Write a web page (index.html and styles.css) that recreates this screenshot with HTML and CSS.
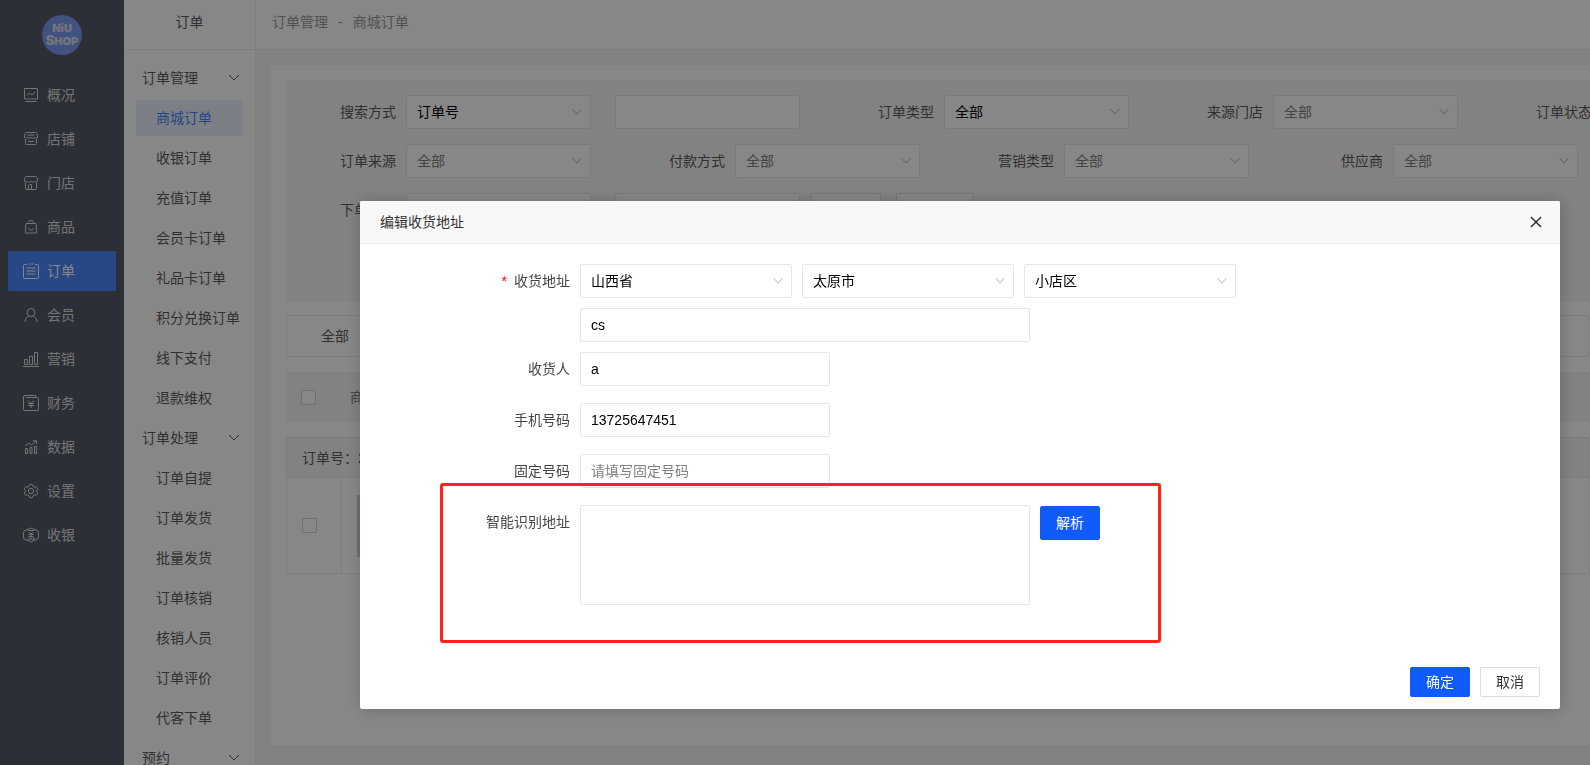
FILE: index.html
```html
<!DOCTYPE html>
<html lang="zh-CN">
<head>
    <meta charset="UTF-8">
    <meta name="viewport" content="width=device-width, initial-scale=1.0">
    <title>商城订单</title>
    <link rel="stylesheet" href="styles.css">
</head>
<body>
    <div class="app">
        <nav class="sidebar">
            <svg class="logo" viewBox="0 0 40 40" role="img" aria-label="NiuShop">
                <circle cx="20" cy="20" r="20"/>
                <text x="20" y="17" font-size="11">NiU</text>
                <text x="20" y="30"><tspan font-size="13">S</tspan><tspan font-size="11">HOP</tspan></text>
            </svg>
            <a href="#" class="nav-item">
                <svg class="icon" viewBox="0 0 16 16"><path d="M1.500 1.500h13v10.500h-13zM2.500 14.500h11M4 8.500l2.500-2.500 2.500 2 3-3"/></svg>概况
            </a>
            <a href="#" class="nav-item">
                <svg class="icon" viewBox="0 0 16 16"><path d="M3.500 1.500h9q1 0 1.300 1l.7 2.500v1.500q-1.500 1.500-3.200 0q-1.600 1.500-3.300 0q-1.700 1.500-3.300 0q-1.700 1.500-3.200 0V5l.7-2.500q.3-1 1.300-1zM2.500 8v4.500q0 1 1 1h9q1 0 1-1V8M4.500 4h7M5 10.500h6"/></svg>店铺
            </a>
            <a href="#" class="nav-item">
                <svg class="icon" viewBox="0 0 16 16"><path d="M3.500 1.500h9q1 0 1.300 1l.7 2.500v1.500q-1.500 1.500-3.200 0q-1.600 1.500-3.300 0q-1.700 1.500-3.300 0q-1.700 1.500-3.200 0V5l.7-2.500q.3-1 1.300-1zM2.500 8v5.500q0 1 1 1h9q1 0 1-1V8M5.500 14.500v-4q0-1 1-1h2v5"/></svg>门店
            </a>
            <a href="#" class="nav-item">
                <svg class="icon" viewBox="0 0 16 16"><path d="M3 4.500h10l.8 9.500H2.200zM5.500 4.500V3.500q0-2 2.500-2t2.500 2v1M5 9q1 2.200 3 2.200T11 9"/></svg>商品
            </a>
            <a href="#" class="nav-item active">
                <svg class="icon" viewBox="0 0 16 16"><path d="M4 1.500H1.500q-1 0-1 1v12q0 1 1 1h13q1 0 1-1v-12q0-1-1-1H12M5.500 1h2M8.500 1h2M3.500 5h9M3.500 8h9M3.500 11h9"/></svg>订单
            </a>
            <a href="#" class="nav-item">
                <svg class="icon" viewBox="0 0 16 16"><circle cx="8" cy="5.500" r="4"/><path d="M1.800 15q.2-4 3.700-6M14.200 15q-.2-4-3.700-6"/></svg>会员
            </a>
            <a href="#" class="nav-item">
                <svg class="icon" viewBox="0 0 16 16"><path d="M0 15.500h16M1.500 8.500h3v5h-3zM6.500 5.500h3v8h-3zM11.500 1.500h3v12h-3z"/></svg>营销
            </a>
            <a href="#" class="nav-item">
                <svg class="icon" viewBox="0 0 16 16"><path d="M3 2.500h11.500q1 0 1 1v11q0 1-1 1h-13q-1 0-1-1V2Q.5.500 2 .5h10.500l1 2M5 5.500l3 3 3-3M8 8.500V13M5 8.500h6M5 10.500h6"/></svg>财务
            </a>
            <a href="#" class="nav-item">
                <svg class="icon" viewBox="0 0 16 16"><path d="M2.500 9.500h2v5h-2zM7 8.500h2v6H7zM11.500 7.500h2v7h-2zM2 7l4-3 2.500 2L13 2M10 1.800h3.500V5"/></svg>数据
            </a>
            <a href="#" class="nav-item">
                <svg class="icon" viewBox="0 0 16 16"><circle cx="8" cy="8" r="2.700"/><path d="M6.600 1.500Q8 1 9.400 1.500L10 3.300l1.300.8 1.900-.4q1.100 1.100 1.500 2.500L13.400 8l1.300 1.800q-.4 1.400-1.500 2.500l-1.900-.4-1.300.8-.6 1.800q-1.400.500-2.800 0L6 12.700l-1.300-.8-1.900.4Q1.700 11.200 1.300 9.800L2.600 8 1.300 6.200q.4-1.400 1.500-2.500l1.900.4L6 3.300z"/></svg>设置
            </a>
            <a href="#" class="nav-item">
                <svg class="icon" viewBox="0 0 16 16"><path d="M4 2.500Q6 2.300 8 1q2 1.300 4 1.500 3.500.3 3.500 3.500v4q0 3-3.500 3.200Q10 13.500 8 15.200 6 13.500 4 13.200.5 13 .5 10V6Q.5 2.800 4 2.500zM4.500 3.500h7M4.500 12h7M6 5l2 2 2-2M8 7v4M5.500 7.500h5M5.500 9.500h5M10 10.500l2 1.500"/></svg>收银
            </a>
        </nav>

        <nav class="submenu">
            <div class="submenu-title">订单</div>
            <div class="submenu-list">
                <button type="button" class="group">订单管理<svg class="arrow" viewBox="0 0 12 12"><path d="M1 3l5 5 5-5"/></svg></button>
                <a href="#" class="sub-item active">商城订单</a>
                <a href="#" class="sub-item">收银订单</a>
                <a href="#" class="sub-item">充值订单</a>
                <a href="#" class="sub-item">会员卡订单</a>
                <a href="#" class="sub-item">礼品卡订单</a>
                <a href="#" class="sub-item">积分兑换订单</a>
                <a href="#" class="sub-item">线下支付</a>
                <a href="#" class="sub-item">退款维权</a>
                <button type="button" class="group">订单处理<svg class="arrow" viewBox="0 0 12 12"><path d="M1 3l5 5 5-5"/></svg></button>
                <a href="#" class="sub-item">订单自提</a>
                <a href="#" class="sub-item">订单发货</a>
                <a href="#" class="sub-item">批量发货</a>
                <a href="#" class="sub-item">订单核销</a>
                <a href="#" class="sub-item">核销人员</a>
                <a href="#" class="sub-item">订单评价</a>
                <a href="#" class="sub-item">代客下单</a>
                <button type="button" class="group">预约<svg class="arrow" viewBox="0 0 12 12"><path d="M1 3l5 5 5-5"/></svg></button>
            </div>
        </nav>

        <div class="main">
            <header class="crumbs">
                <a href="#">订单管理</a><span>-</span><a href="#">商城订单</a>
            </header>
            <main class="card">
                <form class="filters">
                    <div class="filter-row">
                        <label for="search-type">搜索方式</label>
                        <select id="search-type" class="field"><option>订单号</option></select>
                        <input type="text" class="field" aria-label="搜索内容">
                        <label for="order-type">订单类型</label>
                        <select id="order-type" class="field"><option>全部</option></select>
                        <label for="store">来源门店</label>
                        <select id="store" class="field empty"><option>全部</option></select>
                        <label for="status">订单状态</label>
                        <select id="status" class="field empty"><option>全部</option></select>
                    </div>
                    <div class="filter-row">
                        <label for="source">订单来源</label>
                        <select id="source" class="field empty"><option>全部</option></select>
                        <label for="pay">付款方式</label>
                        <select id="pay" class="field empty"><option>全部</option></select>
                        <label for="promo">营销类型</label>
                        <select id="promo" class="field empty"><option>全部</option></select>
                        <label for="supplier">供应商</label>
                        <select id="supplier" class="field empty"><option>全部</option></select>
                    </div>
                    <div class="filter-row">
                        <label for="start">下单时间</label>
                        <input type="text" id="start" class="field">
                        <input type="text" class="field" aria-label="结束时间">
                        <div class="quick">
                            <button type="button" class="btn">近7天</button>
                            <button type="button" class="btn">近30天</button>
                        </div>
                    </div>
                </form>

                <div class="tabs">
                    <button type="button" class="tab">全部</button>
                </div>

                <div class="list-head">
                    <input type="checkbox" aria-label="全选">
                    <span>商品</span>
                </div>

                <table class="order">
                    <thead>
                        <tr><th colspan="2">订单号：2</th></tr>
                    </thead>
                    <tbody>
                        <tr>
                            <td class="check"><input type="checkbox" aria-label="选择订单"></td>
                            <td><div class="thumb"></div></td>
                        </tr>
                    </tbody>
                </table>
            </main>
        </div>
    </div>

    <div class="shade">
        <div class="dialog" role="dialog" aria-labelledby="dialog-title">
            <div class="dialog-head">
                <span id="dialog-title">编辑收货地址</span>
                <button type="button" class="close" aria-label="关闭">
                    <svg viewBox="0 0 12 12"><path d="M1 1l10 10M11 1L1 11"/></svg>
                </button>
            </div>
            <form class="dialog-body">
                <div class="row tight">
                    <label for="province"><span class="required">*</span>收货地址</label>
                    <select id="province" class="field area"><option>山西省</option></select>
                    <select class="field area" aria-label="城市"><option>太原市</option></select>
                    <select class="field area" aria-label="区县"><option>小店区</option></select>
                </div>
                <div class="row tight indent">
                    <input type="text" class="field long" value="cs" aria-label="详细地址">
                </div>
                <div class="row">
                    <label for="receiver">收货人</label>
                    <input type="text" id="receiver" class="field mid" value="a">
                </div>
                <div class="row">
                    <label for="mobile">手机号码</label>
                    <input type="text" id="mobile" class="field mid" value="13725647451">
                </div>
                <div class="row">
                    <label for="phone">固定号码</label>
                    <input type="text" id="phone" class="field mid" placeholder="请填写固定号码">
                </div>
                <div class="row smart">
                    <label for="smart">智能识别地址</label>
                    <textarea id="smart" class="field long"></textarea>
                    <button type="button" class="btn primary parse">解析</button>
                    <div class="marker"></div>
                </div>
            </form>
            <div class="dialog-foot">
                <button type="button" class="btn primary">确定</button>
                <button type="button" class="btn">取消</button>
            </div>
        </div>
    </div>
</body>
</html>
```
FILE: styles.css
```css
* {
    box-sizing: border-box;
}
body {
    margin: 0;
    overflow: hidden;
    color: #5c5c5c;
    font: 14px/20px "Liberation Sans", "Noto Sans CJK SC", sans-serif;
}
a {
    color: inherit;
    text-decoration: none;
}
button, input, select, textarea {
    margin: 0;
    font: inherit;
    color: inherit;
}
svg {
    fill: none;
    stroke: currentColor;
}
.app {
    display: flex;
    height: 100vh;
}

/* left navigation */
.sidebar {
    flex: none;
    width: 124px;
    padding: 15px 8px 0;
    background-color: #555968;
    color: #dcdcde;
}
.logo {
    display: block;
    width: 40px;
    height: 40px;
    margin: 0 auto 20px;
    fill: #dcdde4;
    stroke: none;
    font-family: "Inter", sans-serif;
    font-weight: 900;
    text-anchor: middle;
}
.logo circle {
    fill: #7a9bf5;
}
.nav-item {
    display: flex;
    align-items: center;
    gap: 8px;
    height: 40px;
    margin-bottom: 4px;
    padding-left: 15px;
    border-radius: 2px;
}
.nav-item.active {
    background-color: #4b86fd;
    color: #fff;
}
.icon {
    width: 16px;
    height: 16px;
}

/* second level menu */
.submenu {
    flex: none;
    width: 132px;
    overflow: hidden;
    background-color: #fff;
    border-right: 1px solid #eee;
}
.submenu-title {
    height: 50px;
    line-height: 44px;
    border-bottom: 1px solid #eee;
    text-align: center;
}
.submenu-list {
    display: flex;
    flex-direction: column;
    padding: 8px 12px;
}
.group {
    display: flex;
    flex: none;
    align-items: center;
    justify-content: space-between;
    width: 100%;
    height: 40px;
    padding: 0 3px 0 6px;
    border: none;
    background: none;
}
.arrow {
    width: 12px;
    height: 12px;
}
.sub-item {
    flex: none;
    height: 36px;
    margin: 2px 0;
    padding-left: 20px;
    border-radius: 2px;
    line-height: 36px;
    white-space: nowrap;
}
.sub-item.active {
    background-color: #eaf0fb;
    color: #4685fd;
}

/* page content */
.main {
    flex: 1;
    min-width: 0;
    display: flex;
    flex-direction: column;
    overflow: hidden;
    background-color: #f3f3f7;
}
.crumbs {
    display: flex;
    gap: 10px;
    flex: none;
    height: 50px;
    padding-left: 16px;
    border-bottom: 1px solid #eee;
    background-color: #fff;
    color: #999;
    line-height: 44px;
}
.card {
    flex: 1;
    margin: 15px 0 20px 15px;
    padding: 15px 0 0 15px;
    background-color: #fff;
}
.filters {
    min-height: 221px;
    padding: 15px 0;
    overflow: hidden;
    background-color: #f5f5f5;
}
.filter-row {
    display: flex;
    margin-bottom: 15px;
}
.filter-row label {
    flex: none;
    width: 120px;
    padding-right: 10px;
    line-height: 34px;
    text-align: right;
}
.filter-row .field {
    flex: none;
    width: 185px;
    margin-right: 24px;
}
.quick {
    display: flex;
    gap: 15px;
    margin-left: -13px;
}
.field {
    height: 34px;
    padding: 0 10px;
    border: 1px solid #e6e6e6;
    border-radius: 2px;
    background-color: #fff;
    color: #000;
    outline: none;
}
.field::placeholder {
    color: #808080;
    opacity: 1;
}
select.field {
    appearance: none;
    background-image: url("data:image/svg+xml,%3Csvg xmlns='http://www.w3.org/2000/svg' width='10' height='10' fill='none' stroke='%23c2c2c2' stroke-width='1.1'%3E%3Cpath d='M.5 2l4.500 5 4.500-5'/%3E%3C/svg%3E");
    background-repeat: no-repeat;
    background-position: right 8px center;
}
select.empty {
    color: #808080;
}
.btn {
    height: 30px;
    padding: 0 15px;
    border: 1px solid #dcdcdc;
    border-radius: 2px;
    background-color: #fff;
    color: #333;
    line-height: 28px;
}
.quick .btn {
    padding: 0 16px;
}
.btn.primary {
    border-color: #105cfb;
    background-color: #105cfb;
    color: #fff;
}
.tabs {
    display: flex;
    height: 42px;
    margin-top: 14px;
    border: 1px solid #eee;
}
.tab {
    padding: 0 34px;
    border: none;
    background: none;
}
.list-head {
    display: flex;
    align-items: center;
    gap: 34px;
    height: 50px;
    margin-top: 15px;
    padding-left: 15px;
    background-color: #f5f5f5;
    color: #808080;
}
input[type="checkbox"] {
    appearance: none;
    display: block;
    width: 15px;
    height: 15px;
    border: 1px solid #d2d2d2;
    border-radius: 2px;
    background-color: #fff;
}
.order {
    width: 100%;
    margin-top: 15px;
    border-collapse: collapse;
}
.order th {
    height: 40px;
    padding: 0 15px;
    border: 1px solid #eee;
    background-color: #f6f6f6;
    font-weight: normal;
    text-align: left;
}
.order td {
    height: 96px;
    padding: 0 15px;
    border: 1px solid #eee;
}
.order .check {
    width: 55px;
}
.thumb {
    width: 62px;
    height: 62px;
    background-color: #d9cdd3;
}

/* address dialog */
.shade {
    position: fixed;
    inset: 0;
    display: flex;
    align-items: flex-start;
    justify-content: flex-end;
    padding: 201px 30px 0;
    background-color: rgba(0, 0, 0, 0.47);
}
.dialog {
    width: 1200px;
    border-radius: 2px;
    background-color: #fff;
    box-shadow: 1px 1px 16px rgba(0, 0, 0, 0.2);
}
.dialog-head {
    display: flex;
    align-items: center;
    justify-content: space-between;
    height: 43px;
    padding: 0 18px 0 20px;
    border-bottom: 1px solid #eee;
    border-radius: 2px 2px 0 0;
    background-color: #f8f8f8;
    color: #333;
}
.close {
    display: flex;
    padding: 0;
    border: none;
    background: none;
    color: #2d2d37;
}
.close svg {
    width: 12px;
    height: 12px;
    stroke-width: 1.5;
}
.dialog-body {
    padding: 20px 20px 0;
    color: #454545;
}
.row {
    display: flex;
    gap: 10px;
    margin-bottom: 17px;
}
.row.tight {
    margin-bottom: 10px;
}
.row label {
    flex: none;
    width: 190px;
    line-height: 34px;
    text-align: right;
}
.row.indent {
    padding-left: 200px;
}
.required {
    margin-right: 7px;
    color: #f00;
}
.area {
    width: 212px;
}
.mid {
    width: 250px;
}
.long {
    width: 450px;
}
textarea.field {
    height: 100px;
    padding: 6px 10px;
    resize: none;
}
.smart {
    position: relative;
}
.parse {
    height: 34px;
    margin-top: 1px;
}
/* red frame laid over the smart address row */
.marker {
    position: absolute;
    top: -22px;
    left: 60px;
    width: 721px;
    height: 160px;
    border: 3px solid #ff2318;
    border-radius: 3px;
    pointer-events: none;
}
.dialog-foot {
    display: flex;
    justify-content: flex-end;
    gap: 10px;
    padding: 45px 20px 12px;
}
```
